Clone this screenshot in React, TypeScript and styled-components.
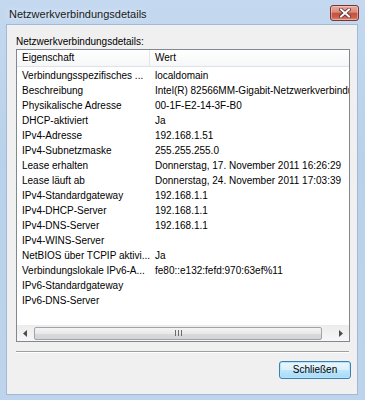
import React from "react";
import styled, { createGlobalStyle } from "styled-components";

const Global = createGlobalStyle`
  html, body { margin: 0; padding: 0; background: #bcd4ec; }
  body { font-family: "Liberation Sans", Arial, sans-serif; }
`;

const Window = styled.div`
  width: 365px;
  height: 400px;
  box-sizing: border-box;
  background: linear-gradient(#c4d9f0, #b9d1ea 40%, #bdd4ec);
  padding: 0 7px 5px 6px;
  display: flex;
  flex-direction: column;
`;

const TitleBar = styled.div`
  height: 24px;
  flex: none;
  display: flex;
  align-items: flex-start;
`;

const Title = styled.div`
  flex: 1;
  margin-top: 7px;
  padding-left: 3px;
  font-size: 11px;
  line-height: 14px;
  color: #1a1a1a;
  text-shadow: 0 0 6px rgba(255, 255, 255, 0.8);
`;

const CloseButton = styled.div`
  margin-top: 5px;
  margin-right: -1px;
  width: 29px;
  height: 16px;
  box-sizing: border-box;
  border: 1px solid #7b3530;
  border-radius: 3px;
  background: linear-gradient(#e9ab9f, #d98a7c 45%, #c5503f 50%, #cb5e4c 80%, #dd8f78);
  box-shadow: inset 0 0 0 1px rgba(255, 220, 210, 0.45);
  display: flex;
  align-items: center;
  justify-content: center;
`;

const Client = styled.div`
  flex: 1;
  box-sizing: border-box;
  background: #f0f0f0;
  border: 1px solid #a3b9d3;
  padding: 9px 7px 0 9px;
  display: flex;
  flex-direction: column;
  font-size: 10px;
  color: #000;
`;

const Label = styled.div`
  height: 15px;
  line-height: 15px;
  font-size: 10px;
`;

const ListBox = styled.div`
  height: 293px;
  box-sizing: border-box;
  border: 1px solid #828790;
  background: #fff;
  display: flex;
  flex-direction: column;
  overflow: hidden;
`;

const Header = styled.div`
  height: 17px;
  flex: none;
  box-sizing: border-box;
  display: flex;
  background: linear-gradient(#ffffff, #f6f7f8);
  border-bottom: 1px solid #dde2e8;
`;

const HeaderCell = styled.div<{ $w?: number }>`
  ${(p) => (p.$w ? `width: ${p.$w}px; flex: none;` : "flex: 1;")}
  box-sizing: border-box;
  padding-left: 5px;
  line-height: 16px;
  white-space: nowrap;
  border-right: ${(p) => (p.$w ? "1px solid #e3e6ea" : "none")};
`;

const Rows = styled.div`
  flex: 1;
  padding-top: 1px;
  overflow: hidden;
`;

const Row = styled.div`
  height: 15px;
  display: flex;
  line-height: 15px;
  white-space: nowrap;
`;

const NameCell = styled.div`
  width: 133px;
  flex: none;
  box-sizing: border-box;
  padding-left: 5px;
  overflow: hidden;
`;

const ValueCell = styled.div`
  padding-left: 5px;
  flex: none;
`;

const ScrollBar = styled.div`
  height: 16px;
  flex: none;
  display: flex;
  align-items: center;
  background: linear-gradient(#ececec, #f7f7f7);
`;

const Arrow = styled.div`
  width: 16px;
  height: 16px;
  flex: none;
  display: flex;
  align-items: center;
  justify-content: center;
`;

const Thumb = styled.div`
  width: 288px;
  height: 13px;
  margin-left: 1px;
  flex: none;
  box-sizing: border-box;
  border: 1px solid #a0a4aa;
  border-radius: 2px;
  background: linear-gradient(#f4f4f4, #e9e9e9 50%, #dadada 51%, #d4d4d4);
  display: flex;
  align-items: center;
  justify-content: center;
`;

const Track = styled.div`
  flex: 1;
`;

const Separator = styled.div`
  margin-top: 9px;
  margin-right: 1px;
  height: 0;
  border-top: 1px solid #a0a0a0;
  border-bottom: 1px solid #ffffff;
`;

const Footer = styled.div`
  display: flex;
  justify-content: flex-end;
  margin-top: 8px;
  margin-right: -1px;
`;

const Button = styled.div`
  width: 72px;
  height: 18px;
  box-sizing: border-box;
  border: 1px solid #3c7fb1;
  border-radius: 3px;
  background: linear-gradient(#eaf6fd, #d9f0fc 50%, #bee6fd 51%, #a7d9f5);
  box-shadow: inset 0 0 0 1px #b6e4fb;
  font-size: 10px;
  line-height: 16px;
  text-align: center;
  color: #000;
`;

const rows: [string, string][] = [
  ["Verbindungsspezifisches ...", "localdomain"],
  ["Beschreibung", "Intel(R) 82566MM-Gigabit-Netzwerkverbindung"],
  ["Physikalische Adresse", "00-1F-E2-14-3F-B0"],
  ["DHCP-aktiviert", "Ja"],
  ["IPv4-Adresse", "192.168.1.51"],
  ["IPv4-Subnetzmaske", "255.255.255.0"],
  ["Lease erhalten", "Donnerstag, 17. November 2011 16:26:29"],
  ["Lease läuft ab", "Donnerstag, 24. November 2011 17:03:39"],
  ["IPv4-Standardgateway", "192.168.1.1"],
  ["IPv4-DHCP-Server", "192.168.1.1"],
  ["IPv4-DNS-Server", "192.168.1.1"],
  ["IPv4-WINS-Server", ""],
  ["NetBIOS über TCPIP aktivi...", "Ja"],
  ["Verbindungslokale IPv6-A...", "fe80::e132:fefd:970:63ef%11"],
  ["IPv6-Standardgateway", ""],
  ["IPv6-DNS-Server", ""],
];

export default function App() {
  return (
    <>
      <Global />
      <Window>
        <TitleBar>
          <Title>Netzwerkverbindungsdetails</Title>
          <CloseButton>
            <svg width="12" height="10" viewBox="0 0 12 10">
              <path d="M2 1.5 L10 8.5 M10 1.5 L2 8.5" stroke="#5a2a28" strokeWidth="3.6" strokeLinecap="square" />
              <path d="M2 1.5 L10 8.5 M10 1.5 L2 8.5" stroke="#ffffff" strokeWidth="2" strokeLinecap="square" />
            </svg>
          </CloseButton>
        </TitleBar>
        <Client>
          <Label>Netzwerkverbindungsdetails:</Label>
          <ListBox>
            <Header>
              <HeaderCell $w={133}>Eigenschaft</HeaderCell>
              <HeaderCell>Wert</HeaderCell>
            </Header>
            <Rows>
              {rows.map(([n, v]) => (
                <Row key={n}>
                  <NameCell>{n}</NameCell>
                  <ValueCell>{v}</ValueCell>
                </Row>
              ))}
            </Rows>
            <ScrollBar>
              <Arrow>
                <svg width="4" height="7" viewBox="0 0 4 7">
                  <path d="M4 0 L0 3.5 L4 7 Z" fill="#4d4d4d" />
                </svg>
              </Arrow>
              <Thumb>
                <svg width="7" height="6" viewBox="0 0 7 6">
                  <path d="M0.5 0 V6 M3.5 0 V6 M6.5 0 V6" stroke="#6a6a6a" strokeWidth="1" />
                </svg>
              </Thumb>
              <Track />
              <Arrow>
                <svg width="4" height="7" viewBox="0 0 4 7">
                  <path d="M0 0 L4 3.5 L0 7 Z" fill="#4d4d4d" />
                </svg>
              </Arrow>
            </ScrollBar>
          </ListBox>
          <Separator />
          <Footer>
            <Button>Schließen</Button>
          </Footer>
        </Client>
      </Window>
    </>
  );
}
